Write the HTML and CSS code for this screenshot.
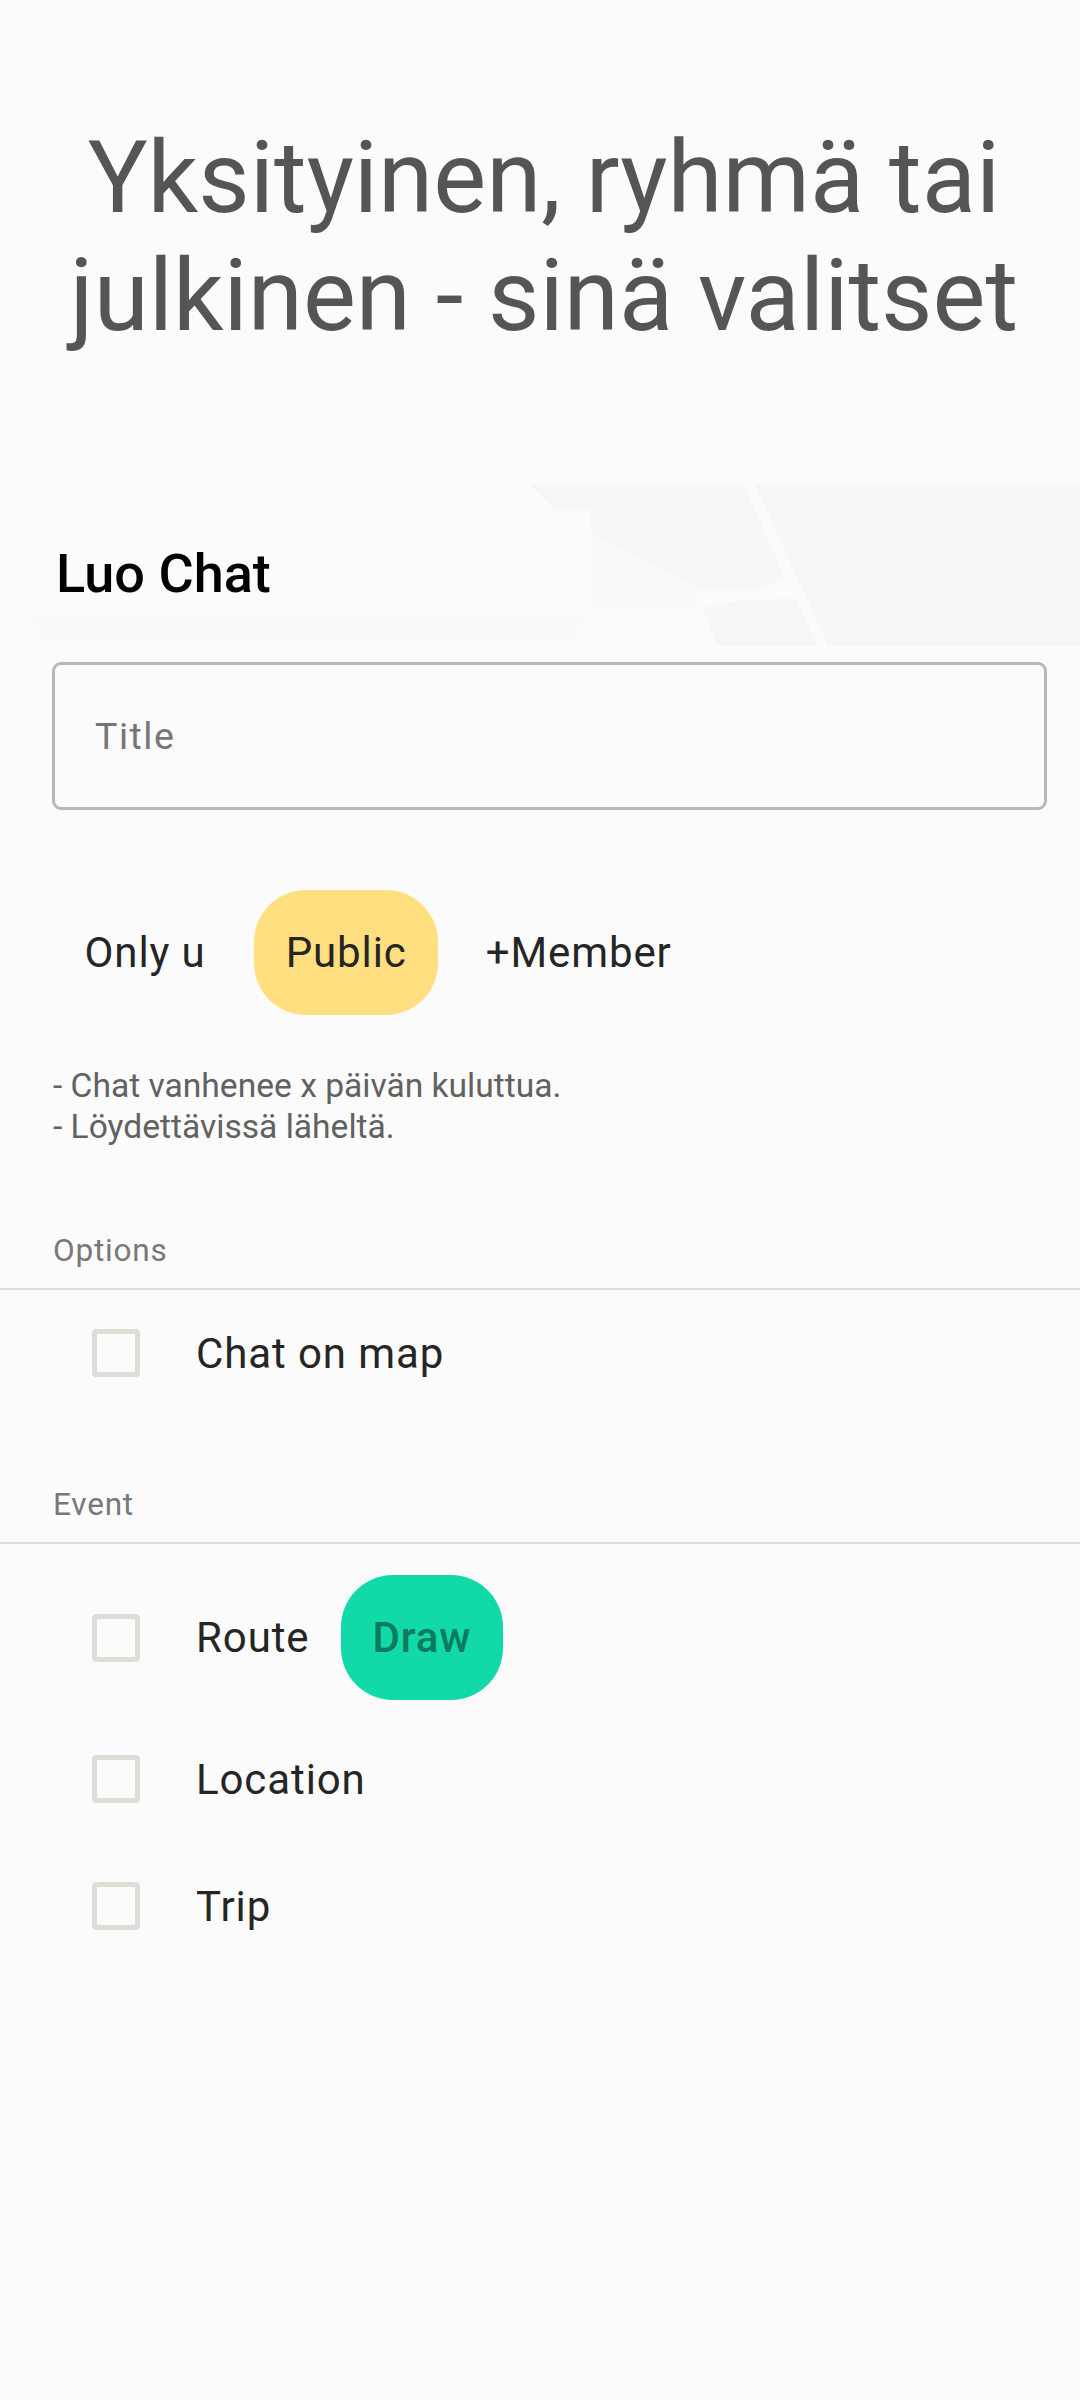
FILE: index.html
```html
<!DOCTYPE html>
<html lang="en">
<head>
  <meta charset="UTF-8" />
  <meta name="viewport" content="width=device-width, initial-scale=1.0"/>
  <title>Luo Chat</title>
  <link rel="stylesheet" href="styles.css">
</head>
<body>
  <header class="hero">
    <h1>Yksityinen, ryhmä tai<br>julkinen - sinä valitset</h1>
  </header>

  <main class="form">
    <svg class="map-bg" viewBox="0 0 1080 162" aria-hidden="true">
      <polygon class="map-faint" points="30,126 590,126 570,162 40,162"/>
      <polygon class="map-faint" points="591,27 700,105 702,124 591,124"/>
      <polygon points="531,0 744,0 785,94 759,105 700,105 591,50 591,27 555,27"/>
      <polygon points="755,0 1080,0 1080,162 828,162"/>
      <polygon points="702,124 737,117 776,115 796,115 817,162 718,162"/>
    </svg>

    <h2 class="form-title">Luo Chat</h2>
    <input class="title-input" type="text" placeholder="Title" />

    <div class="chips">
      <button class="chip">Only u</button>
      <button class="chip chip-public">Public</button>
      <button class="chip">+Member</button>
    </div>

    <p class="notes">- Chat vanhenee x päivän kuluttua.<br>- Löydettävissä läheltä.</p>

    <h3 class="section-label section-options">Options</h3>
    <div class="rows rows-options">
      <label class="row">
        <input type="checkbox" />
        <span>Chat on map</span>
      </label>
    </div>

    <h3 class="section-label section-event">Event</h3>
    <div class="rows">
      <label class="row row-route">
        <input type="checkbox" />
        <span>Route</span>
        <button class="chip chip-draw">Draw</button>
      </label>
      <label class="row row-location">
        <input type="checkbox" />
        <span>Location</span>
      </label>
      <label class="row row-trip">
        <input type="checkbox" />
        <span>Trip</span>
      </label>
    </div>
  </main>
</body>
</html>
```

FILE: styles.css
```css
* {
  box-sizing: border-box;
}

body {
  margin: 0;
  min-height: 2400px;
  background: #fbfbfb;
  font-family: Roboto, sans-serif;
  color: #252525;
}

.hero {
  height: 484px;
  padding: 119px 0 0 8px;
}

.hero h1 {
  margin: 0;
  font-size: 99.8px;
  font-weight: 400;
  line-height: 118px;
  text-align: center;
  color: #555;
}

.form {
  position: relative;
  display: flex;
  flex-direction: column;
  align-items: flex-start;
}

.map-bg {
  position: absolute;
  top: 0;
  left: 0;
  width: 1080px;
  height: 162px;
  fill: #f5f6f8;
}

.map-bg .map-faint {
  fill: #fafafa;
}

.form-title {
  position: relative;
  margin: 57px 0 0 56px;
  font-size: 54px;
  font-weight: 500;
  line-height: 66px;
  color: #000;
}

.title-input {
  position: relative;
  display: block;
  width: 995px;
  height: 148px;
  margin: 55px 0 0 52px;
  padding: 0 40px;
  border: 3px solid #b8b8b8;
  border-radius: 9px;
  background: #fbfbfb;
  font-family: inherit;
  font-size: 37.5px;
  letter-spacing: 1.5px;
}

.title-input::placeholder {
  color: #767676;
  opacity: 1;
}

.chips {
  display: flex;
  align-items: center;
  margin: 80px 0 0 53px;
}

.chip {
  height: 125px;
  padding: 0 31.5px;
  border: none;
  border-radius: 52px;
  background: none;
  font-family: inherit;
  font-size: 42px;
  letter-spacing: 0.9px;
  color: #252525;
}

.chip-public {
  margin: 0 16px 0 17px;
  background: #ffdf80;
}

.chip-draw {
  margin-left: 31px;
  padding: 0 32px;
  background: #12d9a8;
  color: #0b7a5e;
  font-weight: 500;
}

.notes {
  margin: 50px 0 0 53px;
  font-size: 33.6px;
  line-height: 41px;
  color: #616161;
}

.section-label {
  margin: 0 0 0 53px;
  font-size: 31.5px;
  font-weight: 400;
  line-height: 40px;
  letter-spacing: 0.8px;
  color: #787878;
}

.section-options {
  margin-top: 84px;
}

.section-event {
  margin-top: 104px;
}

.rows {
  width: 100%;
  margin-top: 17px;
  border-top: 2px solid #dedede;
}

.rows-options {
  height: 94px;
  margin-bottom: -1px;
}

.row {
  display: flex;
  align-items: center;
  padding-left: 92px;
  font-size: 42px;
  letter-spacing: 0.9px;
}

.row input {
  appearance: none;
  flex: none;
  width: 48px;
  height: 48px;
  margin: 0 56px 0 0;
  border: 5px solid #e0dcd7;
  border-radius: 4px;
  background: #fbfbfb;
}

.rows-options .row {
  height: 48px;
  margin-top: 39px;
}

.row-route {
  height: 125px;
  margin-top: 31px;
}

.row-location {
  height: 48px;
  margin-top: 55px;
}

.row-trip {
  height: 48px;
  margin-top: 79px;
}
```
